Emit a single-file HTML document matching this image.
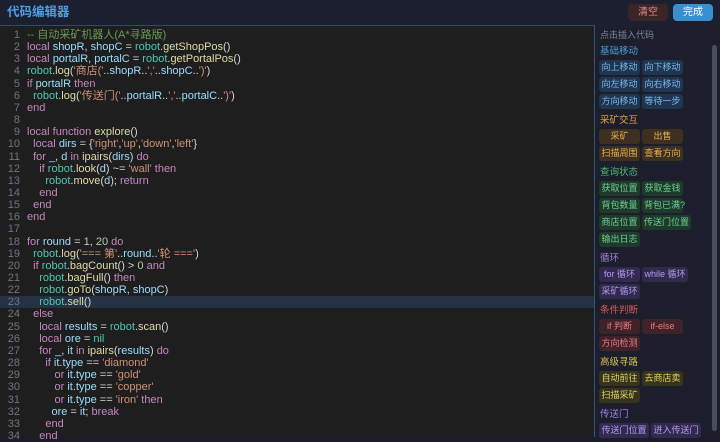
<!DOCTYPE html>
<html><head><meta charset="utf-8"><style>
*{margin:0;padding:0;box-sizing:border-box}
body{width:720px;height:437px;background:#1b1d2b;overflow:hidden;position:relative;font-family:"Liberation Sans","Noto Sans CJK SC",sans-serif}
.hdr{position:absolute;left:0;top:0;width:720px;height:25px;background:#1c1f2f}
.title{position:absolute;left:7px;top:4px;color:#4aa0e6;font-size:12.5px;font-weight:bold;line-height:16px}
.b{position:absolute;top:4px;height:17px;border-radius:4px;font-size:10px;line-height:17px;text-align:center}
.ed{position:absolute;left:0;top:25px;width:595px;height:412px;background:#1e1e1e;border-top:1px solid #2d4a66;border-right:1px solid #2d5a7a;overflow:hidden}
.ln{position:absolute;left:0;width:20px;text-align:right;color:#6e7681;font-size:11px;line-height:12px;height:12px}
.cd{position:absolute;left:27px;color:#d4d4d4;font-size:11px;white-space:pre;line-height:12px;height:12px}
.k{color:#c586c0}.v{color:#9cdcfe}.r{color:#4ec9b0}.f{color:#dcdcaa}.s{color:#ce9178}.c{color:#6a9955}.n{color:#b5cea8}
.side{position:absolute;left:596px;top:25px;width:124px;height:412px;background:#1c1e2b}
.sh{font-size:9px;color:#7d8596;margin:3px 0 0 4px;height:14px;line-height:14px}
.cat{font-size:9.5px;margin:4px 0 2px 4px;height:12px;line-height:12px}
.row{margin-left:3px;height:17px;display:flex;align-items:flex-start}
.bt{display:block;height:15px;line-height:15px;font-size:9px;padding:0 2px;border-radius:3px;margin-right:2px;text-align:center;width:41px;white-space:nowrap}
.sb{position:absolute;left:712px;top:45px;width:5px;height:386px;background:#4a4e5c;border-radius:3px}
</style></head><body>
<div class="hdr"><div class="title">代码编辑器</div>
<div class="b" style="left:628px;width:40px;background:#3a2528;color:#e08a8a">清空</div>
<div class="b" style="left:673px;width:40px;background:#3a8fd2;color:#fff">完成</div></div>
<div class="ed">
<div style="position:absolute;left:0;top:270px;width:594px;height:12px;background:#243243"></div>
</div>
<div id="code"></div>
<div class="side">
<div class="sh">点击插入代码</div>
<div class="cat" style="color:#4a9ee0">基础移动</div>
<div class="row"><span class="bt" style="background:#1f3550;color:#7ab8ec">向上移动</span><span class="bt" style="background:#1f3550;color:#7ab8ec">向下移动</span></div>
<div class="row"><span class="bt" style="background:#1f3550;color:#7ab8ec">向左移动</span><span class="bt" style="background:#1f3550;color:#7ab8ec">向右移动</span></div>
<div class="row"><span class="bt" style="background:#1f3550;color:#7ab8ec">方向移动</span><span class="bt" style="background:#1f3550;color:#7ab8ec">等待一步</span></div>
<div class="cat" style="color:#e0a040">采矿交互</div>
<div class="row"><span class="bt" style="background:#3d3020;color:#e8b050">采矿</span><span class="bt" style="background:#3d3020;color:#e8b050">出售</span></div>
<div class="row"><span class="bt" style="background:#3d3020;color:#e8b050">扫描周围</span><span class="bt" style="background:#3d3020;color:#e8b050">查看方向</span></div>
<div class="cat" style="color:#4cb878">查询状态</div>
<div class="row"><span class="bt" style="background:#1f3a2c;color:#6cd090">获取位置</span><span class="bt" style="background:#1f3a2c;color:#6cd090">获取金钱</span></div>
<div class="row"><span class="bt" style="background:#1f3a2c;color:#6cd090">背包数量</span><span class="bt" style="background:#1f3a2c;color:#6cd090">背包已满?</span></div>
<div class="row"><span class="bt" style="background:#1f3a2c;color:#6cd090">商店位置</span><span class="bt" style="background:#1f3a2c;color:#6cd090;width:49px">传送门位置</span></div>
<div class="row"><span class="bt" style="background:#1f3a2c;color:#6cd090">输出日志</span></div>
<div class="cat" style="color:#a080e0">循环</div>
<div class="row"><span class="bt" style="background:#322a4e;color:#b49af0">for 循环</span><span class="bt" style="background:#322a4e;color:#b49af0;width:46px">while 循环</span></div>
<div class="row"><span class="bt" style="background:#322a4e;color:#b49af0">采矿循环</span></div>
<div class="cat" style="color:#e05a5a">条件判断</div>
<div class="row"><span class="bt" style="background:#40222a;color:#ee7a7a">if 判断</span><span class="bt" style="background:#40222a;color:#ee7a7a">if-else</span></div>
<div class="row"><span class="bt" style="background:#40222a;color:#ee7a7a">方向检测</span></div>
<div class="cat" style="color:#d0c050">高级寻路</div>
<div class="row"><span class="bt" style="background:#36341e;color:#e0d060">自动前往</span><span class="bt" style="background:#36341e;color:#e0d060">去商店卖</span></div>
<div class="row"><span class="bt" style="background:#36341e;color:#e0d060">扫描采矿</span></div>
<div class="cat" style="color:#a080e0">传送门</div>
<div class="row"><span class="bt" style="background:#322a4e;color:#b49af0;width:50px">传送门位置</span><span class="bt" style="background:#322a4e;color:#b49af0;width:50px">进入传送门</span></div>
</div>
<div class="sb"></div>
<script>
var L=[
'<span class="c">-- 自动采矿机器人(A*寻路版)</span>',
'<span class="k">local</span> <span class="v">shopR</span>, <span class="v">shopC</span> = <span class="r">robot</span>.<span class="f">getShopPos</span>()',
'<span class="k">local</span> <span class="v">portalR</span>, <span class="v">portalC</span> = <span class="r">robot</span>.<span class="f">getPortalPos</span>()',
'<span class="r">robot</span>.<span class="f">log</span>(<span class="s">\'商店(\'</span>..<span class="v">shopR</span>..<span class="s">\',\'</span>..<span class="v">shopC</span>..<span class="s">\')\'</span>)',
'<span class="k">if</span> <span class="v">portalR</span> <span class="k">then</span>',
'  <span class="r">robot</span>.<span class="f">log</span>(<span class="s">\'传送门(\'</span>..<span class="v">portalR</span>..<span class="s">\',\'</span>..<span class="v">portalC</span>..<span class="s">\')\'</span>)',
'<span class="k">end</span>','',
'<span class="k">local function</span> <span class="f">explore</span>()',
'  <span class="k">local</span> <span class="v">dirs</span> = {<span class="s">\'right\'</span>,<span class="s">\'up\'</span>,<span class="s">\'down\'</span>,<span class="s">\'left\'</span>}',
'  <span class="k">for</span> <span class="v">_</span>, <span class="v">d</span> <span class="k">in</span> <span class="f">ipairs</span>(<span class="v">dirs</span>) <span class="k">do</span>',
'    <span class="k">if</span> <span class="r">robot</span>.<span class="f">look</span>(<span class="v">d</span>) ~= <span class="s">\'wall\'</span> <span class="k">then</span>',
'      <span class="r">robot</span>.<span class="f">move</span>(<span class="v">d</span>); <span class="k">return</span>',
'    <span class="k">end</span>','  <span class="k">end</span>','<span class="k">end</span>','',
'<span class="k">for</span> <span class="v">round</span> = <span class="n">1</span>, <span class="n">20</span> <span class="k">do</span>',
'  <span class="r">robot</span>.<span class="f">log</span>(<span class="s">\'=== 第\'</span>..<span class="v">round</span>..<span class="s">\'轮 ===\'</span>)',
'  <span class="k">if</span> <span class="r">robot</span>.<span class="f">bagCount</span>() > <span class="n">0</span> <span class="k">and</span>',
'    <span class="r">robot</span>.<span class="f">bagFull</span>() <span class="k">then</span>',
'    <span class="r">robot</span>.<span class="f">goTo</span>(<span class="v">shopR</span>, <span class="v">shopC</span>)',
'    <span class="r">robot</span>.<span class="f">sell</span>()',
'  <span class="k">else</span>',
'    <span class="k">local</span> <span class="v">results</span> = <span class="r">robot</span>.<span class="f">scan</span>()',
'    <span class="k">local</span> <span class="v">ore</span> = <span class="r">nil</span>',
'    <span class="k">for</span> <span class="v">_</span>, <span class="v">it</span> <span class="k">in</span> <span class="f">ipairs</span>(<span class="v">results</span>) <span class="k">do</span>',
'      <span class="k">if</span> <span class="v">it</span>.<span class="v">type</span> == <span class="s">\'diamond\'</span>',
'         <span class="k">or</span> <span class="v">it</span>.<span class="v">type</span> == <span class="s">\'gold\'</span>',
'         <span class="k">or</span> <span class="v">it</span>.<span class="v">type</span> == <span class="s">\'copper\'</span>',
'         <span class="k">or</span> <span class="v">it</span>.<span class="v">type</span> == <span class="s">\'iron\'</span> <span class="k">then</span>',
'        <span class="v">ore</span> = <span class="v">it</span>; <span class="k">break</span>',
'      <span class="k">end</span>','    <span class="k">end</span>'];
var h='';for(var i=0;i<L.length;i++){var t=(29+i*12.15).toFixed(2);
h+='<div class="ln" style="top:'+t+'px">'+(i+1)+'</div><div class="cd" style="top:'+t+'px">'+L[i]+'</div>';}
document.getElementById('code').innerHTML=h;
</script>
</body></html>
